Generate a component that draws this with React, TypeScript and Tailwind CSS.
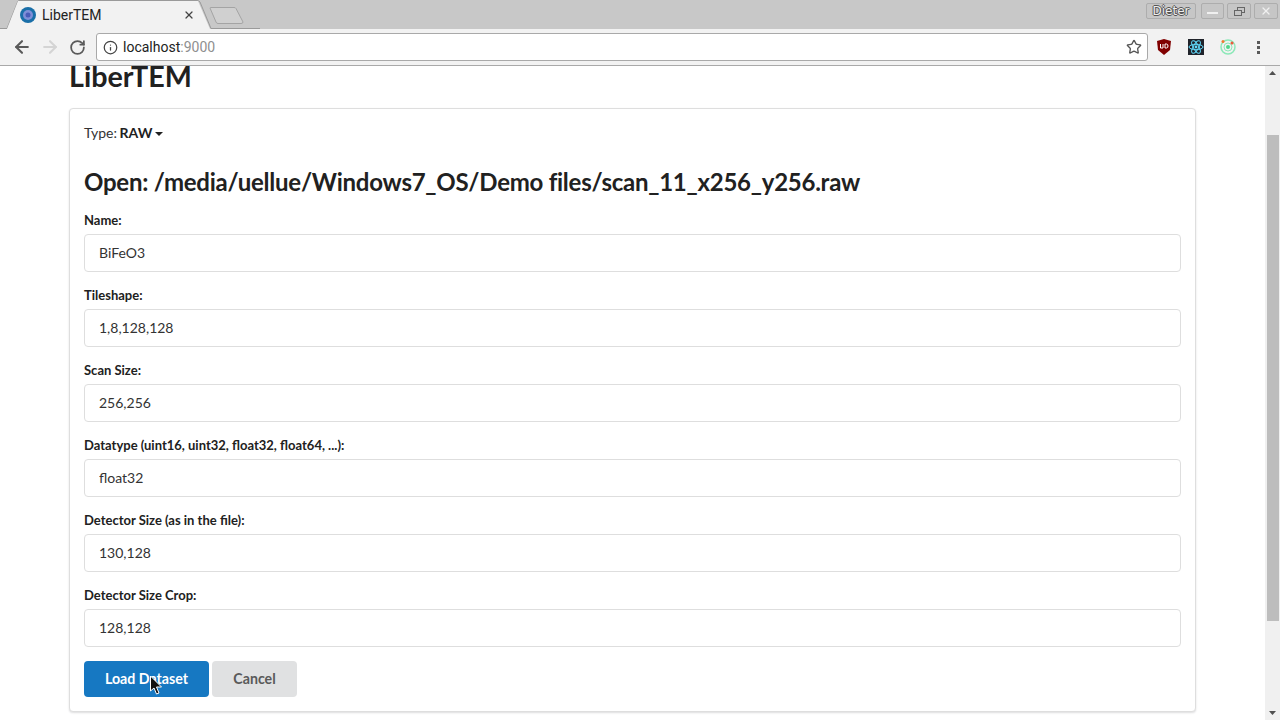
import { ArrowLeft, ArrowRight, RotateCw, Info, Star, X } from 'lucide-react';

const fields = [
  { label: 'Name:', value: 'BiFeO3' },
  { label: 'Tileshape:', value: '1,8,128,128' },
  { label: 'Scan Size:', value: '256,256' },
  { label: 'Datatype (uint16, uint32, float32, float64, ...):', value: 'float32' },
  { label: 'Detector Size (as in the file):', value: '130,128' },
  { label: 'Detector Size Crop:', value: '128,128' },
];

function TabStrip() {
  return (
    <div className="relative h-[29px] bg-[#c8c8c8] flex items-start shrink-0">
      {/* tab shape */}
      <svg className="absolute left-0 top-0" width="260" height="29" viewBox="0 0 260 29">
        <path d="M0 28.5 L7 28.5 L18 1 Q18.5 0.5 20 0.5 L197 0.5 Q199 0.5 200 2 L211 28.5 L260 28.5" fill="none" stroke="#9a9a9a" />
        <path d="M7 29 L18 1 L198 1 L210 29 Z" fill="#f2f2f2" />
        <path d="M210 8 Q210 7.5 211 7.5 L234 7.5 Q235.500 7.500 236 8.500 L243 22 Q243 23.500 241 23.500 L218 23.500 Q216.500 23.500 216 22 Z" fill="#d0d0d0" stroke="#a4a4a4" />
      </svg>
      <div className="relative flex items-center h-[29px] pl-[20px] pt-[1px]">
        <svg width="16" height="16" viewBox="0 0 16 16">
          <circle cx="8" cy="8" r="8" fill="#1a6fa8" />
          <circle cx="8" cy="8" r="5" fill="#7f8fd8" />
          <circle cx="8" cy="8" r="2.500" fill="#4a5cb8" />
        </svg>
        <span className="ml-[6px] text-[14px] text-[#222] font-['Roboto',sans-serif] w-[141px]">LiberTEM</span>
        <X className="w-[12px] h-[12px] text-[#444]" strokeWidth={2.500} />
      </div>
      <div className="ml-auto flex items-start pt-[3px] pr-[2px] relative">
        <div className="w-[50px] h-[16px] mr-[5px] rounded-[2px] bg-[#c6c6c6] border border-[#adadad] text-[12px] leading-[14px] text-center text-[#eeeeee] [text-shadow:1px_0_0_#555,-1px_0_0_#555,0_1px_0_#555,0_-1px_0_#555] font-['DejaVu_Sans',sans-serif]">
          Dieter
        </div>
        <div className="w-[23px] h-[16px] mr-[3px] rounded-[2px] bg-[#c6c6c6] border border-[#adadad] flex items-center justify-center">
          <span className="w-[11px] h-[2px] bg-[#f0f0f0] mt-[3px]" />
        </div>
        <div className="w-[24px] h-[16px] mr-[3px] rounded-[2px] bg-[#c6c6c6] border border-[#adadad] flex items-center justify-center">
          <svg width="11" height="9" viewBox="0 0 11 9">
            <rect x="3.500" y="0.500" width="7" height="5" fill="none" stroke="#666" />
            <rect x="0.500" y="3.500" width="7" height="5" fill="#c6c6c6" stroke="#666" />
          </svg>
        </div>
        <div className="w-[24px] h-[16px] rounded-[2px] bg-[#c6c6c6] border border-[#adadad] flex items-center justify-center">
          <X className="w-[12px] h-[12px] text-[#f0f0f0]" strokeWidth={2.500} />
        </div>
      </div>
    </div>
  );
}

function Toolbar() {
  return (
    <div className="h-[37px] bg-[#f2f2f2] border-b border-[#a9a9a9] flex items-center shrink-0">
      <div className="flex items-center gap-[8px] pl-[12px] w-[96px]">
        <ArrowLeft className="w-[20px] h-[20px] text-[#5a5a5a]" strokeWidth={2.500} />
        <ArrowRight className="w-[20px] h-[20px] text-[#d4d4d4]" strokeWidth={2.500} />
        <RotateCw className="w-[17px] h-[17px] text-[#5a5a5a] ml-[1px]" strokeWidth={2.500} />
      </div>
      <div className="w-[1052px] h-[28px] bg-white border border-[#a9a9a9] rounded-[3px] flex items-center pl-[6px] pr-[5px]">
        <Info className="w-[15px] h-[15px] text-[#444]" strokeWidth={2} />
        <span className="ml-[5px] text-[14px] text-[#222] font-['Roboto',sans-serif]">
          localhost<span className="text-[#8f8f8f]">:9000</span>
        </span>
        <Star className="ml-auto w-[16px] h-[16px] text-[#555]" strokeWidth={2} />
      </div>
      <div className="flex items-center pl-[9px]">
        {/* extension icons */}
        <svg width="14" height="16" viewBox="0 0 14 16">
          <path d="M0 2 L7 0 L14 2 L13 11 L7 16 L1 11 Z" fill="#800000" />
          <path d="M3.500 5 V9 H6 V5 M8 5 V9 H9.500 Q11 9 11 7 Q11 5 9.500 5 H8" fill="none" stroke="#fff" strokeWidth="1" />
        </svg>
        <svg className="ml-[17px]" width="16" height="16" viewBox="0 0 16 16">
          <rect width="16" height="16" fill="#20232a" />
          <g fill="none" stroke="#61dafb" strokeWidth="1">
            <ellipse cx="8" cy="8" rx="7" ry="2.700" />
            <ellipse cx="8" cy="8" rx="7" ry="2.700" transform="rotate(60 8 8)" />
            <ellipse cx="8" cy="8" rx="7" ry="2.700" transform="rotate(120 8 8)" />
          </g>
          <circle cx="8" cy="8" r="1.400" fill="#61dafb" />
        </svg>
        <svg className="ml-[16px]" width="16" height="16" viewBox="0 0 16 16">
          <circle cx="8" cy="8" r="7" fill="none" stroke="#8ce8b8" strokeWidth="1.500" />
          <circle cx="8" cy="8" r="4" fill="none" stroke="#8ce8b8" strokeWidth="1" />
          <circle cx="8" cy="8" r="2" fill="#4fd68a" />
          <circle cx="3" cy="2.500" r="1.500" fill="#f07a30" />
          <circle cx="12" cy="4" r="1.500" fill="#ee5a3a" />
        </svg>
        <div className="ml-[21px] flex flex-col gap-[2px]">
          <span className="w-[3px] h-[3px] bg-[#5a5a5a]" />
          <span className="w-[3px] h-[3px] bg-[#5a5a5a]" />
          <span className="w-[3px] h-[3px] bg-[#5a5a5a]" />
        </div>
      </div>
    </div>
  );
}

function Scrollbar() {
  return (
    <div className="w-[15px] bg-[#f0f0f0] flex flex-col shrink-0 items-center">
      <svg className="mt-[5px] shrink-0" width="7" height="4" viewBox="0 0 7 4">
        <path d="M3.500 0 L7 4 H0 Z" fill="#505050" />
      </svg>
      <div className="w-[12px] h-[486px] mt-[60px] bg-[#bdbdbd]" />
      <svg className="mt-auto mb-[5px] shrink-0" width="7" height="4" viewBox="0 0 7 4">
        <path d="M0 0 H7 L3.500 4 Z" fill="#505050" />
      </svg>
    </div>
  );
}

export default function App() {
  return (
    <div className="relative w-[1280px] h-[720px] overflow-hidden flex flex-col bg-white font-['Lato',sans-serif] text-[#212121]">
      <TabStrip />
      <Toolbar />
      <div className="flex flex-1 min-h-0">
        <div className="flex-1 overflow-hidden pl-[69px] pr-[69px]">
          <h1 className="mt-[-6px] text-[28.700px] leading-[32px] font-bold text-[#212121]">LiberTEM</h1>
          <div className="mt-[16px] bg-white border border-[#dedede] rounded-[4px] shadow-[0_1px_2px_rgba(34,36,38,0.15)] px-[14px] pt-[14px] h-[604px]">
            <div className="text-[14px] leading-[20px] text-[#333]">
              Type: <span className="font-bold text-[#212121] -ml-[1px]">RAW</span>
              <span className="inline-block ml-[3px] align-[2px] w-0 h-0 border-x-[4px] border-x-transparent border-t-[4px] border-t-[#212121]" />
            </div>
            <h2 className="mt-[23px] text-[24px] tracking-[-0.25px] leading-[32px] font-bold text-[#212121]">
              Open: /media/uellue/Windows7_OS/Demo files/scan_11_x256_y256.raw
            </h2>
            <div className="mt-[14px] flex flex-col gap-[15px]">
              {fields.map((f) => (
                <div key={f.label}>
                  <label className="block text-[13px] leading-[17px] font-bold text-[#212121] mb-[5px]">{f.label}</label>
                  <input
                    readOnly
                    value={f.value}
                    className="block w-full h-[38px] px-[14px] pb-[1px] bg-white border border-[#dedede] rounded-[4px] text-[14px] text-[#333] font-['Lato',sans-serif] outline-none"
                  />
                </div>
              ))}
            </div>
            <div className="mt-[14px] flex gap-[3px]">
              <button className="w-[125px] h-[36px] rounded-[4px] bg-[#1678c2] text-white text-[14.200px] font-bold">Load Dataset</button>
              <button className="w-[85px] h-[36px] rounded-[4px] bg-[#e0e1e2] text-[#5a5a5a] text-[14.200px] font-bold">Cancel</button>
            </div>
          </div>
        </div>
        <Scrollbar />
      </div>
      {/* mouse pointer */}
      <svg className="absolute left-[149px] top-[675px]" width="14" height="20" viewBox="0 0 14 20">
        <path d="M1.500 1 L1.500 16 L5 13 L7.500 19 L10 18 L7.500 12 L12.500 12 Z" fill="#111" stroke="#fff" strokeWidth="1" />
      </svg>
    </div>
  );
}
